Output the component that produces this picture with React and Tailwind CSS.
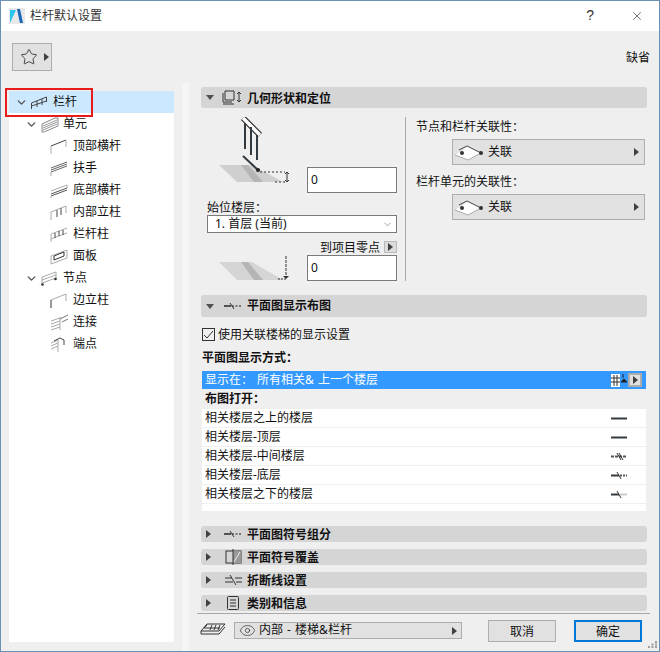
import React from "react";
import { ChevronDown, Star, Eye, X } from "lucide-react";

// small triangles used on section headers and popup buttons
function TriRight({ className = "" }) {
  return <svg width="5" height="8" viewBox="0 0 5 8" className={className}><path d="M0 0L5 4L0 8Z" fill="#404040" /></svg>;
}
function TriDown() {
  return <svg width="8" height="5" viewBox="0 0 8 5"><path d="M0 0H8L4 5Z" fill="#505050" /></svg>;
}

// tree icons, 18x17
function TreeIcon({ children }) {
  return <svg width="18" height="17" viewBox="0 0 18 17" fill="none" stroke="#555" strokeWidth="1" className="shrink-0">{children}</svg>;
}
const icons = {
  railing: <><path d="M0.5 9L15.5 3M0.5 12L15.5 7M0.5 9V15M6 7V13M11 5V11M15.5 3V8" stroke="#444" /></>,
  unit: <><path d="M1 8L14 2H17V10L3 16H1Z" stroke="#888" /><path d="M2 10L16 4M2 12L16 6M2 14L16 8" stroke="#999" /></>,
  top: <><path d="M1 8L16 2" stroke="#444" /><path d="M1 8V16M16 2V9" stroke="#aaa" /></>,
  hand: <><path d="M1 8L17 2M1 10L17 4M1 12L17 6" stroke="#666" /><path d="M1 12V16" stroke="#aaa" /></>,
  bottom: <><path d="M1 9L17 3M17 3V6" stroke="#aaa" /><path d="M1 12L17 6M1 14L17 8" stroke="#555" /><path d="M1 14V16" stroke="#aaa" /></>,
  inner: <><path d="M1 8L16 2M1 8V16M16 2V9" stroke="#aaa" /><path d="M7 6V13M11 4V11" stroke="#444" /></>,
  post: <><path d="M1 8L17 2M1 13L17 7M1 8V16" stroke="#aaa" /><path d="M5 7V12M9 5V10M13 4V9" stroke="#444" /></>,
  panel: <><path d="M1 8L17 2V10L1 16Z" stroke="#aaa" /><path d="M4 8L14 4V8L4 12Z" stroke="#333" /></>,
  node: <><path d="M1 7L15 2V9M1 10L15 5M1 13L15 8M1 7V15" stroke="#aaa" /><circle cx="1.5" cy="14.5" r="1.3" fill="#333" stroke="none" /><circle cx="14.5" cy="9" r="1.3" fill="#333" stroke="none" /></>,
  edge: <><path d="M1 8L16 2" stroke="#aaa" /><path d="M1 8V16" stroke="#333" /><path d="M16 2V9" stroke="#aaa" /></>,
  link: <><path d="M1 7L10 4M1 10L10 7M1 13L10 10M1 16L10 13" stroke="#aaa" /><path d="M10 3V16" stroke="#aaa" /><path d="M10 5L18 1M12 8L18 5" stroke="#777" /></>,
  end: <><path d="M1 7L8 4M1 10L8 7M1 13L8 10" stroke="#aaa" /><path d="M4 5L10 2L14 4V9" stroke="#444" /><path d="M8 4V16" stroke="#aaa" /></>,
};

const tree = [
  { label: "栏杆", icon: "railing", depth: 0, open: true, selected: true },
  { label: "单元", icon: "unit", depth: 1, open: true },
  { label: "顶部横杆", icon: "top", depth: 2 },
  { label: "扶手", icon: "hand", depth: 2 },
  { label: "底部横杆", icon: "bottom", depth: 2 },
  { label: "内部立柱", icon: "inner", depth: 2 },
  { label: "栏杆柱", icon: "post", depth: 2 },
  { label: "面板", icon: "panel", depth: 2 },
  { label: "节点", icon: "node", depth: 1, open: true },
  { label: "边立柱", icon: "edge", depth: 2 },
  { label: "连接", icon: "link", depth: 2 },
  { label: "端点", icon: "end", depth: 2 },
];

const depthPad = ["pl-[6px]", "pl-[16px]", "pl-[41px]"];

function TreeRow({ item }) {
  return (
    <div className={`h-[22px] flex items-center ${depthPad[item.depth]} ${item.selected ? "bg-[#cce8ff]" : ""}`}>
      {item.open && <ChevronDown size={13} strokeWidth={2.6} color="#555" className="mr-[3px] shrink-0" />}
      <TreeIcon>{icons[item.icon]}</TreeIcon>
      <span className={item.depth < 2 ? "ml-[4px]" : "ml-[5px]"}>{item.label}</span>
    </div>
  );
}

function SectionHead({ open, icon, children, className = "", textClass = "pt-[2px]" }) {
  return (
    <div className={`bg-[#d5d5d5] rounded-[3px] flex items-center font-bold ${className}`}>
      <div className="w-[15px] ml-[5px] flex items-center">{open ? <TriDown /> : <TriRight />}</div>
      <div className="w-[24px] flex justify-center">{icon}</div>
      <span className={`ml-[2px] ${textClass}`}>{children}</span>
    </div>
  );
}

function PlanLine({ variant }) {
  return (
    <svg width="16" height="9" viewBox="0 0 16 9" fill="none">
      {variant === "solid" && <path d="M0 4.5H16" stroke="#333a40" strokeWidth="2" />}
      {variant === "mid" && <><path d="M0 4.5H16" stroke="#555" strokeWidth="2" strokeDasharray="3 1" /><path d="M6 1L10 8M8 1L12 8" stroke="#333" /></>}
      {variant === "low" && <><path d="M0 4.5H8" stroke="#333a40" strokeWidth="2" /><path d="M9 4.5H16" stroke="#555" strokeWidth="2" strokeDasharray="2 1" /><path d="M6 1L10 8" stroke="#333" /></>}
      {variant === "under" && <><path d="M0 4.5H8" stroke="#333a40" strokeWidth="2" /><path d="M9 4.5H16" stroke="#ccc" strokeWidth="2" /><path d="M6 1L10 8" stroke="#333" /></>}
    </svg>
  );
}

const breakIcon = (
  <svg width="18" height="8" viewBox="0 0 18 8" fill="none">
    <path d="M0 4H7" stroke="#333" strokeWidth="1.6" /><path d="M8 4H18" stroke="#555" strokeWidth="1.6" strokeDasharray="2 1.5" /><path d="M6 1L10 7" stroke="#333" />
  </svg>
);

const planRows = [
  ["相关楼层之上的楼层", "solid"],
  ["相关楼层-顶层", "solid"],
  ["相关楼层-中间楼层", "mid"],
  ["相关楼层-底层", "low"],
  ["相关楼层之下的楼层", "under"],
];

function LinkButton() {
  return (
    <div className="ml-[36px] w-[193px] h-[26px] bg-[#e1e1e1] border border-[#adadad] flex items-center">
      <svg width="30" height="18" viewBox="0 0 30 18" fill="none" className="ml-[1px]">
        <path d="M1 12L8 8L13 3L27 10L14 17Z" fill="#fff" />
        <path d="M1 12L14 17L27 10" stroke="#aaa" />
        <path d="M5 7L13 3L27 10" stroke="#444" />
        <circle cx="8" cy="10" r="2" fill="#333" /><circle cx="27" cy="10" r="2" fill="#333" />
      </svg>
      <span className="ml-[4px]">关联</span>
      <TriRight className="ml-auto mr-[5px]" />
    </div>
  );
}

export default function App() {
  return (
    <div className="w-[660px] h-[652px] bg-[#efefef] border border-[#6d8fb1] flex flex-col text-[12px] leading-none text-[#111] font-['Noto_Sans','Noto_Sans_CJK_SC',sans-serif] overflow-hidden relative">
      {/* title bar */}
      <div className="h-[30px] bg-white flex items-center shrink-0">
        <svg width="16" height="16" viewBox="0 0 16 16" className="ml-[8px]">
          <rect x="0" y="0" width="16" height="16" fill="#e8e8e8" />
          <path d="M1 15L7 2L1 2Z" fill="#29c4f0" />
          <path d="M8 1H11L14 15H11L9 6Z" fill="#1769b8" />
        </svg>
        <span className="ml-[5px] text-[#333]">栏杆默认设置</span>
        <span className="ml-auto mr-[36px] pb-[2px] text-[#333] text-[14px] font-['Liberation_Sans']">?</span>
        <X size={14} strokeWidth={1.2} color="#333" className="mr-[15px]" />
      </div>

      {/* toolbar */}
      <div className="h-[52px] shrink-0 flex items-start relative">
        <div className="mt-[12px] ml-[11px] w-[40px] h-[28px] bg-[#e1e1e1] border border-[#adadad] flex items-center">
          <Star size={18} strokeWidth={1.2} color="#333" className="ml-[7px]" />
          <TriRight className="ml-[6px]" />
        </div>
        <span className="ml-auto mr-[9px] mt-[21px]">缺省</span>
      </div>

      <div className="flex-1 flex min-h-0">
        {/* tree panel */}
        <div className="w-[165px] ml-[8px] mt-[8px] mb-[9px] bg-white shrink-0">
          {tree.map((item) => <TreeRow key={item.label} item={item} />)}
        </div>
        <div className="w-[7px] ml-[8px] bg-[#f5f5f5] shrink-0" />

        {/* settings */}
        <div className="ml-[12px] w-[446px] flex flex-col">
          <div className="mt-[4px]">
            <SectionHead open className="h-[21px]" icon={
              <svg width="22" height="15" viewBox="0 0 22 15" fill="none" stroke="#333">
                <path d="M3 1H12V10H3ZM1 3V12H10M1 14H12" /><path d="M17 2V12M15 4L17 2L19 4M15 10L17 12L19 10" />
              </svg>
            }>几何形状和定位</SectionHead>
          </div>

          <div className="flex mt-[9px] h-[164px]">
            <div className="w-[190px] ml-[6px] shrink-0 flex flex-col">
              <div className="flex items-end justify-between h-[76px]">
                <svg width="90" height="76" viewBox="0 0 90 76" fill="none">
                  <path d="M12 48H45L76 65H30Z" fill="#cfcfcf" />
                  <path d="M34 48H41L56 65H47Z" fill="#b5b5b5" />
                  <path d="M36 1L53 18" stroke="#333" strokeWidth="6" />
                  <path d="M36 1L53 18" stroke="#fff" strokeWidth="3.5" />
                  <path d="M38 6V32M44 10V38M50 18V43" stroke="#333a40" strokeWidth="2" />
                  <path d="M36 39L51 53" stroke="#333a40" strokeWidth="2" />
                  <circle cx="51" cy="53" r="2" fill="#222" />
                  <path d="M53 55H78M68 65H78" stroke="#333" strokeDasharray="2 2" />
                  <path d="M80 56V64M78 57L80 55L82 57M78 63L80 65L82 63" stroke="#333" />
                </svg>
                <div className="w-[90px] h-[26px] bg-white border border-[#7a7a7a] flex items-center pl-[3px]">0</div>
              </div>
              <div className="mt-[9px] h-[12px]">始位楼层：</div>
              <div className="mt-[1px] h-[20px] w-[190px] bg-white border border-[#7a7a7a] flex items-center pl-[7px]">
                <span>1. 首层 (当前)</span>
                <ChevronDown size={11} color="#555" strokeWidth={1.2} className="ml-auto mr-[3px]" />
              </div>
              <div className="mt-[7px] h-[13px] flex items-center justify-end w-[190px]">
                <span className="pt-[2px]">到项目零点</span>
                <span className="ml-[4px] w-[13px] h-[12px] bg-[#dcdcdc] border border-[#bbb] flex items-center justify-center"><TriRight /></span>
              </div>
              <div className="flex items-start justify-between mt-[2px]">
                <svg width="90" height="26" viewBox="0 0 90 26" fill="none">
                  <path d="M12 7H45L76 25H30Z" fill="#d5d5d5" />
                  <path d="M34 7H41L56 25H47Z" fill="#b5b5b5" />
                  <path d="M79 1V22" stroke="#333" strokeDasharray="3 1" />
                  <path d="M76 21L79 24L82 21Z" fill="#333" />
                  <path d="M71 24H79" stroke="#333" strokeDasharray="2 1" />
                </svg>
                <div className="w-[90px] h-[26px] bg-white border border-[#7a7a7a] flex items-center pl-[3px]">0</div>
              </div>
            </div>
            <div className="w-px h-[164px] ml-[8px] bg-[#a8a8a8] shrink-0" />
            <div className="ml-[10px] flex flex-col w-[230px]">
              <div className="mt-[4px] h-[12px]">节点和栏杆关联性：</div>
              <div className="mt-[6px]"><LinkButton /></div>
              <div className="mt-[11px] h-[12px]">栏杆单元的关联性：</div>
              <div className="mt-[6px]"><LinkButton /></div>
            </div>
          </div>

          <SectionHead open className="h-[22px] mt-[14px]" textClass="" icon={breakIcon}>平面图显示布图</SectionHead>

          <div className="flex items-center mt-[10px] ml-[1px] h-[14px]">
            <div className="w-[13px] h-[13px] border border-[#333] bg-[#efefef] flex items-center justify-center">
              <svg width="11" height="11" viewBox="0 0 11 11" fill="none"><path d="M1 6L4 9L10 2" stroke="#333" /></svg>
            </div>
            <span className="ml-[3px] pt-[2px]">使用关联楼梯的显示设置</span>
          </div>
          <div className="mt-[11px] ml-[1px] h-[12px] font-bold">平面图显示方式：</div>
          <div className="mt-[7px] ml-[1px] w-[444px] h-[18px] bg-[#3399ff] text-white flex items-center pl-[3px] pr-[4px]">
            <span className="whitespace-pre [word-spacing:1px]">显示在： 所有相关&amp; 上一个楼层</span>
            <svg width="16" height="15" viewBox="0 0 16 15" fill="none" className="ml-auto">
              <rect x="0" y="1" width="9" height="13" fill="#fff" />
              <path d="M0 5H9M0 9H9M3 2V13M6 2V13" stroke="#333" />
              <path d="M12 1V5M10 9H16L13 6Z" stroke="#222" fill="#222" />
            </svg>
            <div className="ml-[1px] w-[14px] h-[14px] bg-[#e1e1e1] border-2 border-[#adadad] flex items-center justify-center"><TriRight /></div>
          </div>
          <div className="mt-[3px] ml-[1px] h-[17px] pl-[3px] pb-[4px] flex items-center font-bold">布图打开：</div>
          <div className="ml-[1px] w-[444px] h-[102px] bg-white">
            {planRows.map(([label, variant]) => (
              <div key={label} className="h-[19px] border-b border-[#efefef] flex items-center pl-[3px] pr-[19px] justify-between">
                <span>{label}</span>
                <PlanLine variant={variant} />
              </div>
            ))}
          </div>

          <SectionHead className="h-[16px] mt-[15px]" icon={breakIcon}>平面图符号组分</SectionHead>
          <SectionHead className="h-[16px] mt-[7px]" icon={
            <svg width="17" height="16" viewBox="0 0 17 16" fill="none">
              <rect x="1" y="2" width="15" height="12" stroke="#333" />
              <path d="M8 2H16V14H8Z" fill="#999" /><path d="M9 13L15 3" stroke="#eee" /><path d="M8 0V16" stroke="#333" />
            </svg>
          }>平面符号覆盖</SectionHead>
          <SectionHead className="h-[16px] mt-[7px]" icon={
            <svg width="17" height="10" viewBox="0 0 17 10" fill="none" stroke="#333">
              <path d="M0 3H7M10 3H17M0 7H8M11 7H17M5 0L11 10" />
            </svg>
          }>折断线设置</SectionHead>
          <SectionHead className="h-[16px] mt-[7px]" icon={
            <svg width="12" height="14" viewBox="0 0 12 14" fill="none" stroke="#333">
              <rect x="0.5" y="0.5" width="11" height="13" rx="1" /><path d="M3 4H9M3 7H9M3 10H9" />
            </svg>
          }>类别和信息</SectionHead>
        </div>
      </div>

      {/* footer */}
      <div className="absolute left-[196px] right-[9px] top-[612px] border-t border-[#a8a8a8] h-[33px] flex items-start">
        <svg width="26" height="16" viewBox="0 0 26 16" fill="none" stroke="#333" className="ml-[3px] mt-[6px]">
          <path d="M1 11L7 4H25L19 11ZM1 11V14H19L25 7M4 8H20M7 5L4 8" />
          <path d="M12 5L10 10M16 5L14 10M20 5L18 10" />
        </svg>
        <div className="ml-[8px] mt-[8px] w-[228px] h-[17px] bg-[#e1e1e1] border border-[#adadad] flex items-center">
          <Eye size={17} strokeWidth={1} color="#333" className="ml-[4px]" />
          <span className="ml-[3px] pb-[2px] [word-spacing:1px]">内部 - 楼梯&amp;栏杆</span>
          <TriRight className="ml-auto mr-[4px]" />
        </div>
        <div className="ml-[26px] mt-[6px] w-[68px] h-[22px] bg-[#e1e1e1] border border-[#adadad] flex items-center justify-center pt-[2px]">取消</div>
        <div className="ml-[18px] mt-[6px] w-[68px] h-[22px] bg-[#e1e1e1] border-2 border-[#0078d7] flex items-center justify-center pt-[2px]">确定</div>
      </div>

      {/* resize grip */}
      <svg width="9" height="7" viewBox="0 0 9 7" className="absolute right-[2px] bottom-[3px]" fill="#a0a0a0">
        <rect x="7" y="0" width="2" height="2" /><rect x="3.5" y="2.5" width="2" height="2" /><rect x="7" y="2.5" width="2" height="2" />
        <rect x="0" y="5" width="2" height="2" /><rect x="3.5" y="5" width="2" height="2" /><rect x="7" y="5" width="2" height="2" />
      </svg>

      {/* selection marker drawn over the tree */}
      <div className="absolute left-[4px] top-[87px] w-[88px] h-[29px] border-2 border-[#e81c1c]" />
    </div>
  );
}
